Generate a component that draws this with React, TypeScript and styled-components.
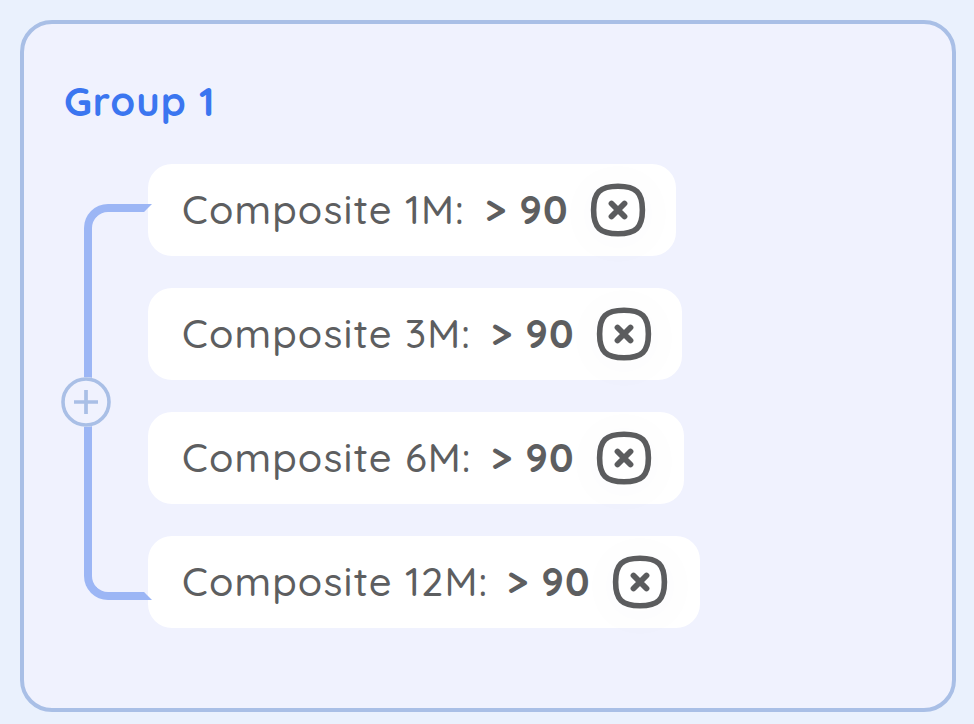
import React from "react";
import styled, { createGlobalStyle } from "styled-components";

const GlobalStyle = createGlobalStyle`
  * { box-sizing: border-box; }
  body {
    margin: 0;
    background: #eaf1fd;
    font-family: Quicksand, Lato, sans-serif;
    overflow: hidden;
  }
`;

const Page = styled.main`
  height: 724px;
  padding: 20px 18px 12px 20px;
`;

const Card = styled.section`
  height: 692px;
  padding: 53px 40px 0;
  border: 4px solid #a9bfe6;
  border-radius: 32px;
  background: #f0f2fe;
`;

const Title = styled.h2`
  margin: 0 0 39px;
  height: 48px;
  font-size: 40px;
  line-height: 48px;
  font-weight: 700;
  letter-spacing: 1px;
  color: #3b76f0;
  white-space: nowrap;
`;

const Conditions = styled.div`
  position: relative;
  padding-left: 84px;
`;

const List = styled.ul`
  display: flex;
  flex-direction: column;
  align-items: flex-start;
  gap: 32px;
  margin: 0;
  padding: 0;
  list-style: none;
`;

const Pill = styled.li<{ $width: number }>`
  display: flex;
  align-items: center;
  width: ${(p) => p.$width}px;
  height: 92px;
  padding-left: 34px;
  border-radius: 24px;
  background: #fff;
  font-size: 40px;
  line-height: 48px;
  color: #5d5e60;
  white-space: nowrap;
`;

const Label = styled.span<{ $width: number }>`
  width: ${(p) => p.$width}px;
  margin-top: -2px;
  font-weight: 500;
  letter-spacing: 1.1px;
`;

const Value = styled.span`
  width: 106px;
  margin-top: -2px;
  padding-left: 1px;
  font-weight: 700;
  letter-spacing: 1px;
`;

const RemoveButton = styled.button`
  display: flex;
  width: 56px;
  height: 56px;
  padding: 0;
  border: 0;
  border-radius: 50%;
  background: none;
  color: #5b5c5e;
  box-shadow: 0 4px 50px rgba(90, 90, 120, 0.03);
`;

const Bracket = styled.div`
  position: absolute;
  top: 40px;
  left: 20px;
  width: 68px;
  height: 396px;
  border: 8px solid #9cb6f5;
  border-right-color: transparent;
  border-radius: 24px 0 0 24px;
  pointer-events: none;
`;

const AddButton = styled.button`
  position: absolute;
  top: 213px;
  left: -3px;
  width: 50px;
  height: 50px;
  padding: 0;
  border: 0;
  border-radius: 50%;
  background: #f0f2fe;
  color: #a9bfe6;
`;

type Condition = {
  label: string;
  width: number;
  labelWidth: number;
};

const conditions: Condition[] = [
  { label: "Composite 1M:", width: 528, labelWidth: 302 },
  { label: "Composite 3M:", width: 534, labelWidth: 308 },
  { label: "Composite 6M:", width: 536, labelWidth: 308 },
  { label: "Composite 12M:", width: 552, labelWidth: 324 },
];

const RemoveIcon = () => (
  <svg width="56" height="56" viewBox="0 0 56 56" fill="none" stroke="currentColor">
    <path
      d="M28 4.3C46 4.3 52.4 10.5 52.4 28S46 51.7 28 51.7 3.6 45.5 3.6 28 10 4.3 28 4.3Z"
      strokeWidth="5.6"
    />
    <path d="M21.5 21.5l13 13m0-13l-13 13" strokeWidth="5.8" strokeLinecap="round" />
  </svg>
);

const AddIcon = () => (
  <svg width="50" height="50" viewBox="0 0 50 50" fill="none" stroke="currentColor">
    <circle cx="25" cy="25" r="23" strokeWidth="3.6" />
    <path d="M25 13v24M13 25h24" strokeWidth="3.7" />
  </svg>
);

export default function App() {
  return (
    <>
      <GlobalStyle />
      <Page>
        <Card>
          <Title>Group 1</Title>
          <Conditions>
            <List>
              {conditions.map((c) => (
                <Pill key={c.label} $width={c.width}>
                  <Label $width={c.labelWidth}>{c.label}</Label>
                  <Value>&gt; 90</Value>
                  <RemoveButton aria-label="Remove condition">
                    <RemoveIcon />
                  </RemoveButton>
                </Pill>
              ))}
            </List>
            <Bracket />
            <AddButton aria-label="Add condition">
              <AddIcon />
            </AddButton>
          </Conditions>
        </Card>
      </Page>
    </>
  );
}
